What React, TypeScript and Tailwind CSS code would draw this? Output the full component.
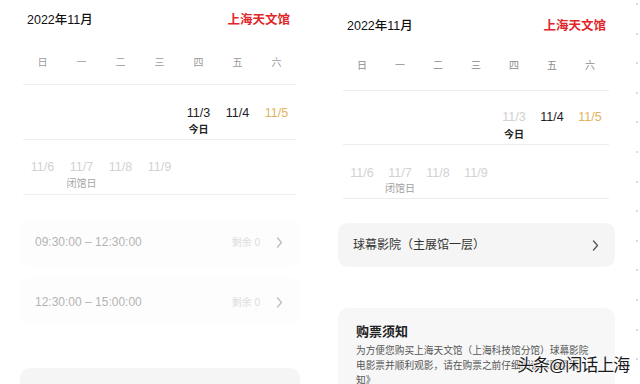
import React from 'react';

const week = ['日', '一', '二', '三', '四', '五', '六'];

const Chevron = ({ color }: { color: string }) => (
  <svg width="7" height="11" viewBox="0 0 7 11" fill="none" stroke={color} strokeWidth={1.3} strokeLinecap="round" strokeLinejoin="round">
    <polyline points="1.5,1 5.5,5.5 1.5,10" />
  </svg>
);

const App = () => {
  return (
    <div className="relative flex h-[384px] w-[640px] overflow-hidden bg-white font-['Liberation_Sans','Noto_Sans_CJK_SC',sans-serif]">
      {/* Left screenshot */}
      <div className="w-[320px] shrink-0 pl-[20px]">
        <div className="ml-[3px] w-[273px]">
          <div className="flex h-[40px] items-center justify-between">
            <span className="ml-[4px] text-[12.5px] font-medium text-[#111]">2022年11月</span>
            <span className="mr-[6px] text-[12.5px] font-bold text-[#e0262a]">上海天文馆</span>
          </div>
          <div className="grid h-[45px] grid-cols-7 items-center border-b border-[#efefef] text-center text-[10px] text-[#9a9a9a]">
            {week.map((d) => (
              <span key={d}>{d}</span>
            ))}
          </div>
          <div className="grid h-[55px] grid-cols-7 border-b border-[#efefef] pt-[20px] text-center">
            <div />
            <div />
            <div />
            <div />
            <div>
              <div className="text-[12.5px] leading-[16px] font-medium text-[#222]">11/3</div>
              <div className="mt-[2px] text-[10px] leading-[14px] font-bold text-[#222]">今日</div>
            </div>
            <div className="text-[12.5px] leading-[16px] font-medium text-[#222]">11/4</div>
            <div className="text-[12.5px] leading-[16px] font-medium text-[#e3b25e]">11/5</div>
          </div>
          <div className="grid h-[55px] grid-cols-7 border-b border-[#efefef] pt-[19px] text-center">
            <div className="text-[12.5px] leading-[16px] text-[#d2d2d2]">11/6</div>
            <div>
              <div className="text-[12.5px] leading-[16px] text-[#d2d2d2]">11/7</div>
              <div className="mt-[2px] text-[10px] leading-[14px] text-[#a6a6a6]">闭馆日</div>
            </div>
            <div className="text-[12.5px] leading-[16px] text-[#d2d2d2]">11/8</div>
            <div className="text-[12.5px] leading-[16px] text-[#d2d2d2]">11/9</div>
          </div>
        </div>
        <div className="mt-[23px] flex h-[48px] w-[280px] items-center justify-between rounded-[10px] bg-[#fdfdfd] pl-[15px] pr-[17px]">
          <span className="text-[12px] text-[#b4b4b4]">09:30:00 – 12:30:00</span>
          <div className="flex items-center gap-[16px]">
            <span className="text-[10px] text-[#dcdcdc]">剩余 0</span>
            <Chevron color="#bdbdbd" />
          </div>
        </div>
        <div className="mt-[12px] flex h-[48px] w-[280px] items-center justify-between rounded-[10px] bg-[#fdfdfd] pl-[15px] pr-[17px]">
          <span className="text-[12px] text-[#b4b4b4]">12:30:00 – 15:00:00</span>
          <div className="flex items-center gap-[16px]">
            <span className="text-[10px] text-[#dcdcdc]">剩余 0</span>
            <Chevron color="#bdbdbd" />
          </div>
        </div>
        <div className="mt-[42px] h-[60px] w-[280px] rounded-[10px] bg-[#f5f5f5]" />
      </div>

      {/* Right screenshot */}
      <div className="w-[314px] shrink-0 pl-[18px] pt-[6px]">
        <div className="ml-[5px] w-[266px]">
          <div className="flex h-[40px] items-center justify-between">
            <span className="ml-[4px] text-[12.5px] font-medium text-[#111]">2022年11月</span>
            <span className="mr-[3px] text-[12.5px] font-bold text-[#e0262a]">上海天文馆</span>
          </div>
          <div className="grid h-[45px] grid-cols-7 border-b border-[#ececec] pt-[13px] text-center text-[10px] leading-[14px] text-[#8c8c8c]">
            {week.map((d) => (
              <span key={d}>{d}</span>
            ))}
          </div>
          <div className="grid h-[54px] grid-cols-7 border-b border-[#ececec] pt-[18px] text-center">
            <div />
            <div />
            <div />
            <div />
            <div>
              <div className="text-[12.5px] leading-[16px] text-[#d0d0d0]">11/3</div>
              <div className="mt-[3px] text-[10px] leading-[14px] font-bold text-[#222]">今日</div>
            </div>
            <div className="text-[12.5px] leading-[16px] font-medium text-[#222]">11/4</div>
            <div className="text-[12.5px] leading-[16px] font-medium text-[#e3b25e]">11/5</div>
          </div>
          <div className="grid h-[54px] grid-cols-7 border-b border-[#ececec] pt-[20px] text-center">
            <div className="text-[12.5px] leading-[16px] text-[#d2d2d2]">11/6</div>
            <div>
              <div className="text-[12.5px] leading-[16px] text-[#d2d2d2]">11/7</div>
              <div className="mt-[1px] text-[10px] leading-[14px] text-[#a0a0a0]">闭馆日</div>
            </div>
            <div className="text-[12.5px] leading-[16px] text-[#d2d2d2]">11/8</div>
            <div className="text-[12.5px] leading-[16px] text-[#d2d2d2]">11/9</div>
          </div>
        </div>
        <div className="mt-[24px] flex h-[44px] w-[277px] items-center justify-between rounded-[10px] bg-[#f5f5f5] pl-[15px] pr-[16px]">
          <span className="text-[12px] text-[#333]">球幕影院（主展馆一层）</span>
          <Chevron color="#555" />
        </div>
        <div className="mt-[41px] h-[90px] w-[277px] rounded-[10px] bg-[#f7f7f7] pl-[18px] pt-[15px]">
          <div className="text-[13px] leading-[18px] font-bold text-[#222]">购票须知</div>
          <p className="mt-[2px] w-[237px] text-[9.7px] leading-[15px] text-[#555]">
            为方便您购买上海天文馆（上海科技馆分馆）球幕影院电影票并顺利观影，请在购票之前仔细阅读《购票须知》
          </p>
        </div>
      </div>

      {/* Scroll dots */}
      <div className="flex w-[6px] flex-col items-center gap-[27.6px] pt-[3px]">
        {Array.from({ length: 13 }).map((_, i) => (
          <span key={i} className="h-[2px] w-[2px] shrink-0 rounded-full bg-[#cfcfcf]" />
        ))}
      </div>

      {/* Watermark */}
      <div className="absolute left-[517px] top-[355px] text-[17px] leading-[22px] tracking-[-1px] text-[#1a1a1a] [text-shadow:0_0_2px_#fff,0_0_2px_#fff,0_0_3px_#fff]">
        头条@闲话上海
      </div>
    </div>
  );
};

export default App;
